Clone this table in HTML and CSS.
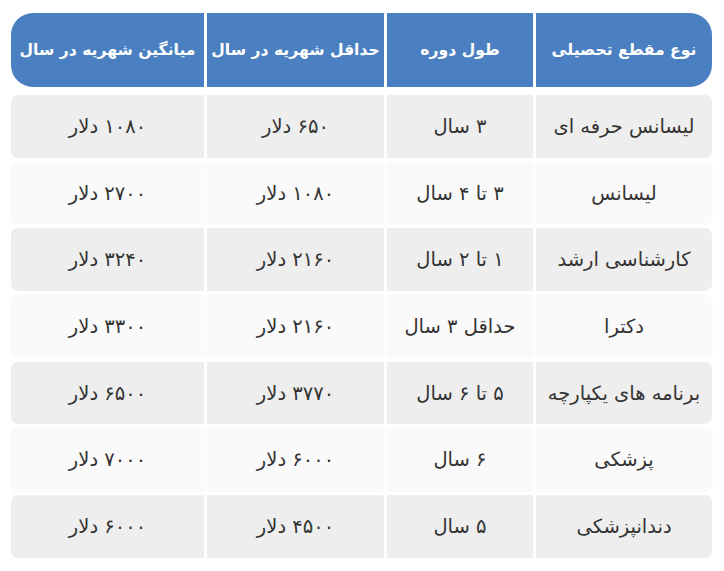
FILE: index.html
```html
<!DOCTYPE html>
<html lang="fa" dir="rtl">
<head>
<meta charset="utf-8">
<title>شهریه</title>
<link rel="stylesheet" href="styles.css">
</head>
<body>
<div class="table">
  <div class="row head">
    <div class="cell">نوع مقطع تحصیلی</div>
    <div class="cell">طول دوره</div>
    <div class="cell">حداقل شهریه در سال</div>
    <div class="cell">میانگین شهریه در سال</div>
  </div>
  <div class="row odd">
    <div class="cell">لیسانس حرفه ای</div>
    <div class="cell">۳ سال</div>
    <div class="cell">۶۵۰ دلار</div>
    <div class="cell">۱۰۸۰ دلار</div>
  </div>
  <div class="row even">
    <div class="cell">لیسانس</div>
    <div class="cell">۳ تا ۴ سال</div>
    <div class="cell">۱۰۸۰ دلار</div>
    <div class="cell">۲۷۰۰ دلار</div>
  </div>
  <div class="row odd">
    <div class="cell">کارشناسی ارشد</div>
    <div class="cell">۱ تا ۲ سال</div>
    <div class="cell">۲۱۶۰ دلار</div>
    <div class="cell">۳۲۴۰ دلار</div>
  </div>
  <div class="row even">
    <div class="cell">دکترا</div>
    <div class="cell">حداقل ۳ سال</div>
    <div class="cell">۲۱۶۰ دلار</div>
    <div class="cell">۳۳۰۰ دلار</div>
  </div>
  <div class="row odd">
    <div class="cell">برنامه های یکپارچه</div>
    <div class="cell">۵ تا ۶ سال</div>
    <div class="cell">۳۷۷۰ دلار</div>
    <div class="cell">۶۵۰۰ دلار</div>
  </div>
  <div class="row even">
    <div class="cell">پزشکی</div>
    <div class="cell">۶ سال</div>
    <div class="cell">۶۰۰۰ دلار</div>
    <div class="cell">۷۰۰۰ دلار</div>
  </div>
  <div class="row odd">
    <div class="cell">دندانپزشکی</div>
    <div class="cell">۵ سال</div>
    <div class="cell">۴۵۰۰ دلار</div>
    <div class="cell">۶۰۰۰ دلار</div>
  </div>
</div>
</body>
</html>
```
FILE: styles.css
```css
html, body {
  margin: 0;
  padding: 0;
  background: #ffffff;
}
body {
  font-family: "DejaVu Sans", "Noto Sans", sans-serif;
  color: #333333;
}
.table {
  margin: 13px 12px 0 11px;
  display: flex;
  flex-direction: column;
  gap: 4px;
}
.row {
  display: grid;
  grid-template-columns: 176px 146px 177px 1fr;
  column-gap: 3px;
  height: 62.7px;
}
.cell {
  display: flex;
  align-items: center;
  justify-content: center;
  font-size: 19.5px;
  white-space: nowrap;
}
.head {
  height: 74px;
  margin-bottom: 4px;
}
.head .cell {
  background: #4a80c2;
  color: #ffffff;
  font-weight: bold;
  font-size: 15.6px;
}
.head .cell:first-child {
  border-radius: 0 22px 22px 0;
}
.head .cell:last-child {
  border-radius: 22px 0 0 22px;
}
.odd .cell {
  background: #eeeeee;
}
.even .cell {
  background: #fafafa;
  box-shadow: 0 0 2px rgba(0, 0, 0, 0.05);
}
.odd .cell:first-child,
.even .cell:first-child {
  border-radius: 0 7px 7px 0;
}
.odd .cell:last-child,
.even .cell:last-child {
  border-radius: 7px 0 0 7px;
}
```
